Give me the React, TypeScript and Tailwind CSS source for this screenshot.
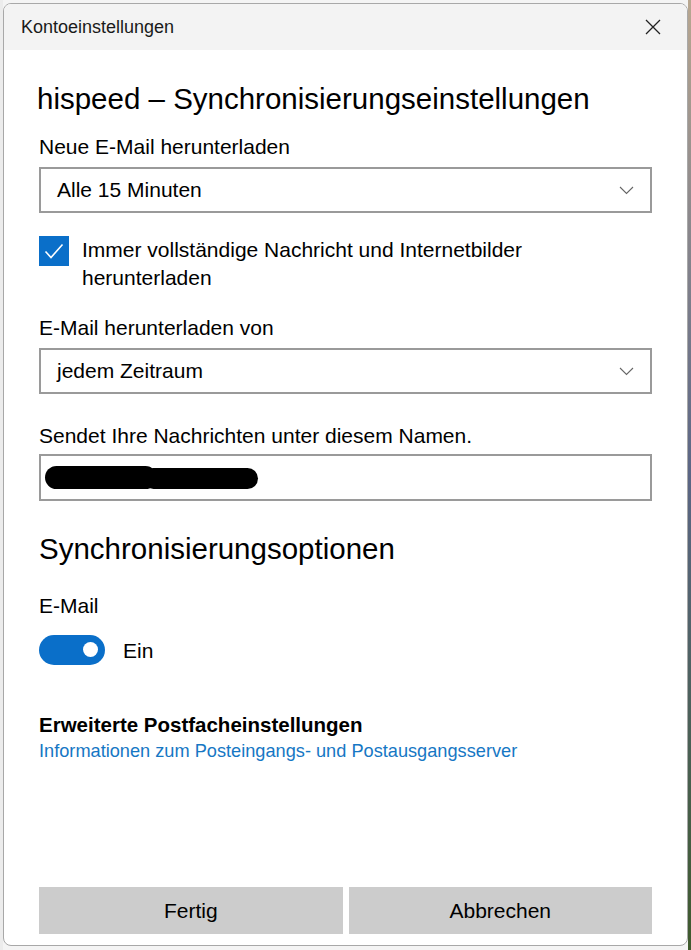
import React from 'react';

const FONT = { fontFamily: '"Liberation Sans", Arial, sans-serif' };

function Chevron() {
  return (
    <svg width="15" height="9" viewBox="0 0 15 9" fill="none" className="shrink-0">
      <path d="M1 1l6.5 6.5L14 1" stroke="#666" strokeWidth="1.1" />
    </svg>
  );
}

function Select({ value }: { value: string }) {
  return (
    <div className="flex h-[46px] items-center justify-between border-2 border-[#9a9a9a] bg-white pl-[16px] pr-[16px]">
      <span className="text-[21px] text-black">{value}</span>
      <Chevron />
    </div>
  );
}

function Label({ children }: { children: React.ReactNode }) {
  return <div className="mb-[6px] text-[21px] leading-[28px] text-black">{children}</div>;
}

export default function App() {
  return (
    <div className="flex h-[950px] w-[691px] bg-[#f4f4f4]" style={FONT}>
      <div className="w-[3px] bg-[#ececec]" />
      <div className="mt-[3px] mb-[4px] flex flex-1 flex-col overflow-hidden rounded-[8px] border border-[#a8a8a8] bg-white">
        {/* title bar */}
        <div className="flex h-[46px] shrink-0 items-center justify-between bg-[#f3f3f3] pl-[17px] pr-[26px]">
          <span className="text-[18px] text-[#1a1a1a]">Kontoeinstellungen</span>
          <svg width="16" height="16" viewBox="0 0 16 16" fill="none">
            <path d="M1 1l14 14M15 1L1 15" stroke="#222" strokeWidth="1.3" />
          </svg>
        </div>

        {/* body */}
        <div className="flex flex-1 flex-col pl-[35px] pr-[35px] pt-[31px]">
          <h1 className="ml-[-2px] text-[29.5px] font-normal leading-[36px] text-black">
            hispeed – Synchronisierungseinstellungen
          </h1>

          <div className="mt-[16px]">
            <Label>Neue E-Mail herunterladen</Label>
            <Select value="Alle 15 Minuten" />
          </div>

          <div className="mt-[23px] flex items-start gap-[13px]">
            <div className="flex h-[30px] w-[30px] shrink-0 items-center justify-center bg-[#0a6fc9]">
              <svg width="20" height="16" viewBox="0 0 20 16" fill="none">
                <path d="M1.5 8.5l5.5 6L18.5 1.5" stroke="#fff" strokeWidth="1.6" />
              </svg>
            </div>
            <div className="text-[21px] leading-[28px] text-black">
              Immer vollständige Nachricht und Internetbilder
              <br />
              herunterladen
            </div>
          </div>

          <div className="mt-[22px]">
            <Label>E-Mail herunterladen von</Label>
            <Select value="jedem Zeitraum" />
          </div>

          <div className="mt-[28px]">
            <div className="mb-[4px] text-[21px] leading-[28px] text-black">
              Sendet Ihre Nachrichten unter diesem Namen.
            </div>
            <div className="flex h-[47px] items-center border-2 border-[#9a9a9a] bg-white pl-[4px]">
              <div className="flex items-start">
                <div className="h-[23px] w-[112px] rounded-full bg-black" />
                <div className="ml-[-14px] mt-[2px] h-[21px] w-[115px] rounded-full bg-black" />
              </div>
            </div>
          </div>

          <h2 className="mt-[30px] text-[29.5px] font-normal leading-[36px] text-black">
            Synchronisierungsoptionen
          </h2>

          <div className="mt-[25px] text-[21px] leading-[28px] text-black">E-Mail</div>

          <div className="mt-[13px] flex items-center gap-[18px]">
            <div className="flex h-[30px] w-[66px] items-center justify-end rounded-full bg-[#0a6fc9] pr-[7px]">
              <div className="h-[15px] w-[15px] rounded-full bg-white" />
            </div>
            <span className="mt-[2px] text-[21px] text-black">Ein</span>
          </div>

          <div className="mt-[45px] text-[20.5px] font-bold leading-[26px] text-black">
            Erweiterte Postfacheinstellungen
          </div>
          <div className="text-[18.2px] leading-[26px] text-[#1677c4]">
            Informationen zum Posteingangs- und Postausgangsserver
          </div>

          <div className="mt-auto mb-[11px] flex gap-[6px]">
            <button className="h-[47px] flex-1 bg-[#cccccc] text-[21px] text-black">Fertig</button>
            <button className="h-[47px] flex-1 bg-[#cccccc] text-[21px] text-black">Abbrechen</button>
          </div>
        </div>
      </div>
      <div className="w-[3px] bg-gradient-to-b from-[#b8a790] via-[#5b6685] to-[#3f5a2c]" />
    </div>
  );
}
